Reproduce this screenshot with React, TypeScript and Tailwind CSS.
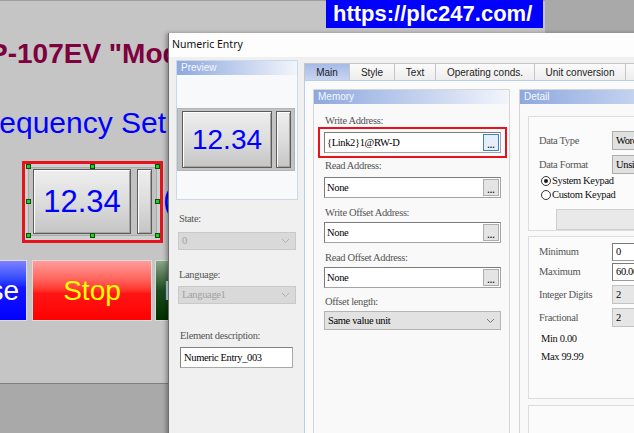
import React from "react";

const sans = "font-['Liberation_Sans',Arial,sans-serif]";
const serif = "font-['Liberation_Serif','Times_New_Roman',serif]";
const ui = "font-['Noto_Sans','Liberation_Sans',sans-serif]";

function Chevron({ color = "#8c8c8c" }: { color?: string }) {
  return (
    <svg width="9" height="6" viewBox="0 0 9 6" fill="none">
      <path d="M1 1l3.5 3.5L8 1" stroke={color} strokeWidth="1" />
    </svg>
  );
}

function Bevel({ className = "", children }: { className?: string; children?: React.ReactNode }) {
  return (
    <div
      className={`flex items-center justify-center border border-[#5c5c5c] bg-gradient-to-b from-[#eeeeee] via-[#dddddd] to-[#c5c5c5] shadow-[inset_1px_1px_0_#fdfdfd,inset_-1px_-1px_0_#a5a5a5] ${className}`}
    >
      {children}
    </div>
  );
}

const handles: [number, number][] = [
  [28, 166],
  [92, 166],
  [157, 166],
  [28, 201],
  [157, 201],
  [28, 235],
  [92, 235],
  [157, 235],
];

function HmiScreen() {
  return (
    <div className="absolute left-0 top-0 w-[545px] h-[384px] bg-[#c5c5c5] border-b border-b-[#7f7f7f]">
      <div className="absolute left-0 top-0 w-full h-px bg-[#9e9e9e]" />
      <div className={`absolute left-[-11px] top-[40px] whitespace-nowrap text-[28px] leading-[28px] font-bold text-[#7e003d] ${sans}`}>
        P-107EV "Modbus"
      </div>
      <div className={`absolute left-[-29px] top-[108px] whitespace-nowrap text-[30px] leading-[30px] text-[#0000ff] ${sans}`}>
        Frequency Set
      </div>

      {/* selected numeric entry */}
      <div className="absolute left-[22px] top-[161px] w-[141px] h-[82px] border-[3px] border-[#e5141c] bg-[#d0d0d0]" />
      <div className="absolute left-[28px] top-[167px] w-[129px] h-[69px] bg-[#c2c2c2] border border-[#ababab] flex items-start gap-[6px] pl-[4px] pt-[1px]">
        <Bevel className="w-[98px] h-[65px]">
          <span className={`text-[31px] leading-none text-[#0000ff] ${sans}`}>12.34</span>
        </Bevel>
        <Bevel className="w-[15px] h-[65px]" />
      </div>
      {handles.map(([x, y]) => (
        <div
          key={`${x}-${y}`}
          className="absolute w-[5px] h-[5px] bg-[#20d020] border border-[#0b4d0b]"
          style={{ left: x - 2, top: y - 2 }}
        />
      ))}
      <div className={`absolute left-[163px] top-[184px] whitespace-nowrap text-[31px] leading-[31px] text-[#0000ff] ${sans}`}>
        (Hz)
      </div>

      {/* command buttons */}
      <div className={`absolute left-[-93px] top-[260px] w-[120px] h-[61px] border border-[#dcdcec] bg-gradient-to-b from-[#7f7fff] via-[#1414ff] via-45% to-[#0000ff] flex items-center justify-center text-[28px] text-white ${sans}`}>
        Reverse
      </div>
      <div className={`absolute left-[32px] top-[260px] w-[120px] h-[61px] border border-[#e2dada] bg-gradient-to-b from-[#ff9c9c] via-[#ff1414] via-55% to-[#ff0000] flex items-center justify-center text-[28px] text-[#ffff00] ${sans}`}>
        Stop
      </div>
      <div className={`absolute left-[155px] top-[260px] w-[120px] h-[61px] border border-[#d4dcd4] bg-gradient-to-b from-[#8aa68a] via-[#1e4a1e] via-50% to-[#003000] flex items-center justify-center text-[28px] text-[#dedede] ${sans}`}>
        Forward
      </div>
    </div>
  );
}

function Banner() {
  return (
    <div className={`absolute left-[326px] top-0 w-[217px] h-[28px] bg-[#0000ff] text-white font-bold text-[22px] leading-[28px] pl-[7px] whitespace-nowrap ${sans}`}>
      https://plc247.com/
    </div>
  );
}

function GroupHeader({ children }: { children: React.ReactNode }) {
  return (
    <div className={`h-[14px] shrink-0 bg-gradient-to-r from-[#8ea8de] to-[#f2f5fb] text-[#f6f8ff] text-[10px] leading-[14px] pl-[4px] ${sans}`}>
      {children}
    </div>
  );
}

function Label({ className = "", children }: { className?: string; children: React.ReactNode }) {
  return (
    <div className={`h-[13px] text-[10.5px] leading-[13px] tracking-[-0.35px] text-[#555] whitespace-nowrap ${serif} ${className}`}>
      {children}
    </div>
  );
}

function AddressField({ value, focused = false, className = "" }: { value: string; focused?: boolean; className?: string }) {
  return (
    <div
      className={`h-[21px] bg-white border border-[#a3a3a3] border-t-[#7c7c7c] border-l-[#7c7c7c] flex items-center justify-between pl-[2px] pr-[1px] ${className}`}
    >
      <span className={`text-[10.5px] tracking-[-0.35px] text-black whitespace-nowrap ${serif}`}>{value}</span>
      <div
        className={`w-[16px] h-[17px] flex items-end justify-center pb-[2px] text-[9px] leading-[6px] font-bold text-[#222] ${sans} ${
          focused ? "border border-[#3c7fd6] bg-[#e5eefa]" : "border border-[#adadad] bg-[#e4e4e4]"
        }`}
      >
        ...
      </div>
    </div>
  );
}

function DisabledSelect({ value, className = "" }: { value: string; className?: string }) {
  return (
    <div className={`w-[118px] h-[18px] bg-[#d9d9d9] border border-[#c9c9c9] flex items-center justify-between pl-[3px] pr-[5px] ${className}`}>
      <span className={`text-[10.5px] tracking-[-0.35px] text-[#a2a2a2] ${serif}`}>{value}</span>
      <Chevron color="#b0b0b0" />
    </div>
  );
}

function DetailRow({
  label,
  value,
  kind,
  className = "",
}: {
  label: string;
  value: string;
  kind: "combo" | "edit" | "readonly";
  className?: string;
}) {
  const box =
    kind === "edit"
      ? "bg-white border border-[#9a9a9a] border-t-[#7a7a7a] border-l-[#7a7a7a]"
      : kind === "combo"
      ? "bg-[#e1e1e1] border border-[#adadad]"
      : "bg-[#e6e6e6] border border-[#c2c2c2]";
  return (
    <div className={`flex items-center ${className}`}>
      <div className={`w-[73px] text-[10.5px] tracking-[-0.35px] text-[#555] whitespace-nowrap ${serif}`}>{label}</div>
      <div className={`w-[80px] self-stretch flex items-center pl-[3px] ${box}`}>
        <span className={`text-[10.5px] tracking-[-0.35px] text-black whitespace-nowrap ${serif}`}>{value}</span>
      </div>
    </div>
  );
}

function Radio({ checked, label, className = "" }: { checked?: boolean; label: string; className?: string }) {
  return (
    <div className={`h-[14px] flex items-center gap-[1px] ml-[2px] ${className}`}>
      <div className="w-[10px] h-[10px] rounded-full border border-[#333] bg-white flex items-center justify-center">
        {checked && <div className="w-[4px] h-[4px] rounded-full bg-[#1a1a1a]" />}
      </div>
      <span className={`text-[10.5px] tracking-[-0.35px] text-[#111] whitespace-nowrap ${serif}`}>{label}</span>
    </div>
  );
}

function Tab({ children, active = false, className = "" }: { children: React.ReactNode; active?: boolean; className?: string }) {
  return (
    <div
      className={`h-[17px] border-t border-l border-[#c6c6c6] flex items-center justify-center text-[10px] text-[#1b1b1b] whitespace-nowrap ${sans} ${
        active ? "bg-gradient-to-b from-[#a5bbe7] to-[#c8d5f0]" : "bg-gradient-to-b from-[#fbfbfb] to-[#ededed]"
      } ${className}`}
    >
      {children}
    </div>
  );
}

function NumericEntryDialog() {
  return (
    <div className="absolute left-[168px] top-[33px] w-[480px] h-[410px] flex flex-col bg-[#f0f0f0] border-l border-[#6e6e6e] shadow-[-2px_0_4px_rgba(0,0,0,0.3)]">
      <div className={`h-[24px] shrink-0 bg-[#fdfdfd] pl-[3px] text-[10.5px] leading-[22px] text-[#111] ${ui}`}>Numeric Entry</div>

      <div className="flex flex-1 min-h-0">
        {/* left column: preview and element properties */}
        <div className="w-[135px] shrink-0 pl-[7px] pt-[3px] flex flex-col">
          <div className="w-[122px] h-[140px] border border-[#cdd9e6] bg-[#f7f9fb] flex flex-col">
            <GroupHeader>Preview</GroupHeader>
            <div className="mt-[33px] w-[118px] h-[63px] bg-[#c3c3c3] border border-[#b3b3b3] flex items-start gap-[4px] pl-[4px] pt-[2px]">
              <Bevel className="w-[90px] h-[57px]">
                <span className={`text-[28px] leading-none text-[#0000ff] ${sans}`}>12.34</span>
              </Bevel>
              <Bevel className="w-[15px] h-[57px]" />
            </div>
          </div>

          <Label className="mt-[12px] ml-[3px] text-[#333]">State:</Label>
          <DisabledSelect value="0" className="mt-[7px] ml-[2px]" />
          <Label className="mt-[18px] ml-[3px] text-[#333]">Language:</Label>
          <DisabledSelect value="Language1" className="mt-[5px] ml-[2px]" />
          <Label className="mt-[25px] ml-[4px] text-[#333]">Element description:</Label>
          <div className="mt-[5px] ml-[4px] w-[113px] h-[21px] bg-white border border-[#a8a8a8] border-t-[#828282] border-l-[#828282] flex items-center pl-[3px]">
            <span className={`text-[10.5px] tracking-[-0.35px] text-black whitespace-nowrap ${serif}`}>Numeric Entry_003</span>
          </div>
        </div>

        {/* right column: tabs */}
        <div className="flex-1 flex flex-col pt-[6px]">
          <div className="flex shrink-0">
            <Tab active className="w-[45px]">Main</Tab>
            <Tab className="w-[45px]">Style</Tab>
            <Tab className="w-[41px]">Text</Tab>
            <Tab className="w-[99px]">Operating conds.</Tab>
            <Tab className="w-[91px]">Unit conversion</Tab>
            <Tab className="w-[90px] border-r">Security</Tab>
          </div>

          <div className="flex-1 min-h-0 border border-[#b8cde6] bg-[#fafafa] flex gap-[9px] pl-[8px] pt-[8px]">
            {/* memory */}
            <div className="w-[197px] shrink-0 border border-[#d6d6d6] bg-[#f9f9f9] flex flex-col pr-[8px]">
              <div className="-mr-[8px]">
                <GroupHeader>Memory</GroupHeader>
              </div>
              <div className="pl-[10px] flex flex-col">
                <Label className="mt-[10px] ml-[1px]">Write Address:</Label>
                <div className="-mx-[6px] border-2 border-[#e8121c] px-[4px] py-[3px]">
                  <AddressField value="{Link2}1@RW-D" focused />
                </div>
                <Label className="mt-[1px] ml-[1px]">Read Address:</Label>
                <AddressField value="None" className="mt-[5px]" />
                <Label className="mt-[8px] ml-[1px]">Write Offset Address:</Label>
                <AddressField value="None" className="mt-[3px]" />
                <Label className="mt-[8px] ml-[1px]">Read Offset Address:</Label>
                <AddressField value="None" className="mt-[3px]" />
                <Label className="mt-[7px] ml-[1px]">Offset length:</Label>
                <div className="mt-[3px] h-[19px] bg-[#e2e2e2] border border-[#b4b4b4] flex items-center justify-between pl-[3px] pr-[5px]">
                  <span className={`text-[10.5px] tracking-[-0.35px] text-black whitespace-nowrap ${serif}`}>Same value unit</span>
                  <Chevron color="#777" />
                </div>
              </div>
            </div>

            {/* detail */}
            <div className="flex-1 border border-[#d6d6d6] bg-[#f9f9f9] flex flex-col">
              <GroupHeader>Detail</GroupHeader>
              <div className="ml-[8px] mt-[12px] w-[200px] h-[117px] border border-[#dcdcdc] bg-[#fbfbfb] pl-[10px] pt-[14px] flex flex-col">
                <DetailRow label="Data Type" value="Word" kind="combo" className="h-[19px]" />
                <DetailRow label="Data Format" value="Unsigned" kind="combo" className="h-[19px] mt-[5px]" />
                <Radio checked label="System Keypad" />
                <Radio label="Custom Keypad" />
                <div className="mt-[7px] ml-[17px] h-[21px] bg-[#e9e9e9] border border-[#cfcfcf]" />
              </div>
              <div className="ml-[8px] mt-[5px] w-[200px] h-[184px] border border-[#dcdcdc] bg-[#fbfbfb] pl-[10px] pt-[6px] flex flex-col">
                <DetailRow label="Minimum" value="0" kind="edit" className="h-[18px]" />
                <DetailRow label="Maximum" value="60.00" kind="edit" className="h-[18px] mt-[2px]" />
                <DetailRow label="Integer Digits" value="2" kind="readonly" className="h-[19px] mt-[4px]" />
                <DetailRow label="Fractional" value="2" kind="readonly" className="h-[19px] mt-[4px]" />
                <div className={`mt-[5px] ml-[2px] h-[14px] text-[10.5px] leading-[14px] tracking-[-0.35px] text-[#111] ${serif}`}>Min 0.00</div>
                <div className={`mt-[4px] ml-[2px] h-[14px] text-[10.5px] leading-[14px] tracking-[-0.35px] text-[#111] ${serif}`}>Max 99.99</div>
              </div>
              <div className="ml-[8px] mt-[6px] w-[200px] h-[40px] border border-[#dcdcdc] bg-[#fbfbfb]" />
            </div>
          </div>
        </div>
      </div>
    </div>
  );
}

export default function App() {
  return (
    <div className="relative w-[634px] h-[433px] overflow-hidden bg-[#a9a9a9]">
      <HmiScreen />
      <Banner />
      <NumericEntryDialog />
    </div>
  );
}
